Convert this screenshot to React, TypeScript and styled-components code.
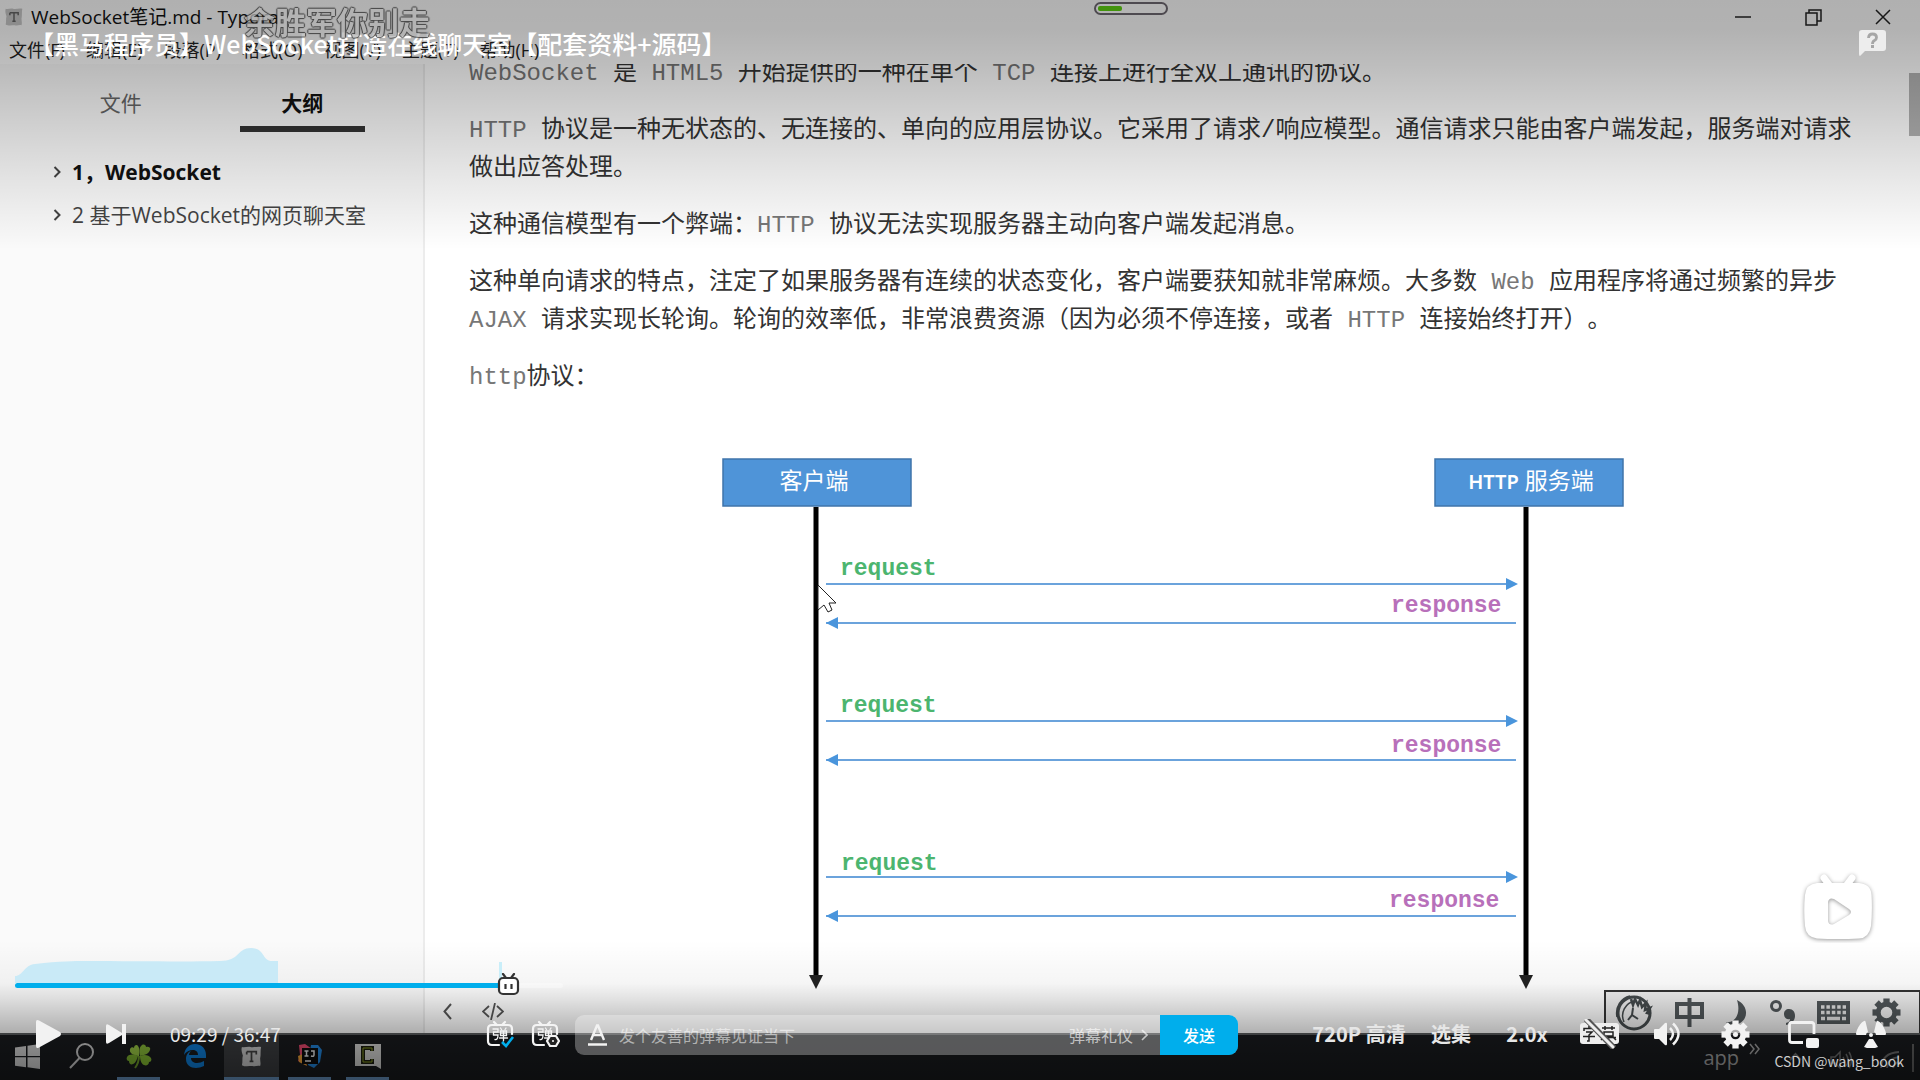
import React from "react";
import styled, { createGlobalStyle } from "styled-components";

const uiFont = `"Open Sans", "Noto Sans CJK SC", sans-serif`;
const playerFont = `"Noto Sans CJK SC", sans-serif`;
const monoFont = `"Liberation Mono", "Noto Sans CJK SC", monospace`;

const GlobalStyle = createGlobalStyle`
  *, *::before, *::after { box-sizing: border-box; }
  html, body { margin: 0; padding: 0; background: #000; }
  body { font-family: ${uiFont}; text-spacing-trim: space-all; }
  button, input { font: inherit; color: inherit; border: 0; background: none; padding: 0; margin: 0; }
  button { cursor: pointer; }
  svg { display: block; flex: none; }
  p, h1, ul { margin: 0; padding: 0; }
`;

const Stage = styled.main`
  display: grid;
  grid-template: 100vh / 100%;
  overflow: hidden;
  position: relative;
`;

const Desktop = styled.section`
  grid-area: 1 / 1;
  display: flex;
  flex-direction: column;
  min-height: 0;
  background: #fff;
`;

/* ---------- editor window ---------- */

const TitleBar = styled.header`
  display: flex;
  align-items: center;
  height: 34px;
  flex: none;
  padding: 0 2px 0 4px;
  gap: 7px;
  color: #111;
  font-size: 19px;
  line-height: 24px;
`;

const WindowButtons = styled.div`
  display: flex;
  margin-left: auto;
`;

const WindowButton = styled.button`
  width: 70px;
  height: 34px;
  display: grid;
  place-items: center;
`;

const MenuBar = styled.nav`
  display: flex;
  align-items: center;
  height: 30px;
  flex: none;
  padding: 2px 9px 0;
  gap: 21px;
  color: #222;
  font-size: 18px;
  line-height: 24px;
  white-space: nowrap;
`;

const Workspace = styled.div`
  display: flex;
  flex: 1;
  min-height: 0;
`;

const Sidebar = styled.aside`
  width: 425px;
  flex: none;
  background: #fafafa;
  border-right: 2px solid #ececec;
`;

const Tabs = styled.div`
  display: flex;
  gap: 56px;
  padding: 20px 58px 0;
`;

const Tab = styled.button<{ $active?: boolean }>`
  width: 126px;
  height: 48px;
  padding-bottom: 4px;
  font-size: 21px;
  line-height: 32px;
  font-weight: ${(p) => (p.$active ? 700 : 400)};
  color: ${(p) => (p.$active ? "#111" : "#666")};
  border-bottom: 6px solid ${(p) => (p.$active ? "#333" : "transparent")};
`;

const Outline = styled.ul`
  list-style: none;
  padding: 18px 53px 0;
`;

const OutlineItem = styled.li<{ $strong?: boolean }>`
  display: flex;
  align-items: center;
  gap: 10px;
  height: 43px;
  white-space: nowrap;
  font-size: 21px;
  line-height: 32px;
  font-weight: ${(p) => (p.$strong ? 700 : 400)};
  color: ${(p) => (p.$strong ? "#111" : "#444")};
`;

const Editor = styled.div`
  position: relative;
  flex: 1;
  min-width: 0;
  display: flex;
  flex-direction: column;
`;

const Article = styled.article`
  flex: 1;
  min-height: 0;
  overflow: hidden;
  padding: 0 48px 0 44px;
  font-family: ${monoFont};
  font-size: 24px;
  line-height: 38px;
  color: #333;
  background: #fff;

  p { margin-bottom: 19px; }
  p:first-child { margin-top: -9px; }
`;

const Latin = styled.span`
  color: #777;
`;

const Figure = styled.figure`
  margin: 60px 0 0;
  display: flex;
  justify-content: center;
  svg { overflow: visible; }
`;

const EditorFooter = styled.footer`
  height: 43px;
  flex: none;
  display: flex;
  align-items: center;
  gap: 30px;
  padding-left: 18px;
  color: #555;
`;

const ScrollThumb = styled.div`
  position: absolute;
  right: 0;
  top: 9px;
  width: 11px;
  height: 63px;
  background: #b2b2b2;
`;

const ImeBar = styled.div`
  position: absolute;
  right: 0;
  bottom: 0;
  height: 43px;
  display: flex;
  align-items: center;
  gap: 22px;
  padding: 0 18px 0 8px;
  border: 1px solid #333;
  border-width: 2px 1px 0 2px;
  background: #f2f2f2;
  color: #51575a;
`;

/* ---------- task bar ---------- */

const Taskbar = styled.footer`
  height: 47px;
  flex: none;
  display: flex;
  justify-content: space-between;
  background: #191b1e;
  border-top: 2px solid #5a5c5e;
`;

const TaskGroup = styled.div`
  display: flex;
  align-items: stretch;
  gap: 1px;
`;

const TaskButton = styled.button<{ $open?: boolean; $active?: boolean }>`
  width: ${(p) => (p.$active ? 55 : p.$open ? 43 : 54)}px;
  margin: 0 ${(p) => (p.$active ? 1 : p.$open ? 7 : 0)}px;
  display: grid;
  place-items: center;
  border-bottom: 3px solid ${(p) => (p.$open ? "#6d9bcb" : "transparent")};
  background: ${(p) => (p.$active ? "#3c3e41" : "transparent")};

  &:nth-child(n + 3) { position: static; }
`;

const Tray = styled.div`
  display: flex;
  align-items: center;
  gap: 10px;
  padding-right: 6px;
  color: #a4a4a4;
  font-size: 20px;
  line-height: 26px;
`;

const TrayIcons = styled.span`
  display: flex;
  gap: 28px;
  padding: 4px 12px 0 18px;
  color: #6c6c6c;
  border-right: 2px solid #606060;
`;

/* ---------- player chrome ---------- */

const TopShade = styled.div`
  grid-area: 1 / 1;
  align-self: start;
  height: 250px;
  z-index: 1;
  pointer-events: none;
  background: linear-gradient(rgba(0,0,0,.31), rgba(0,0,0,.3) 12%, rgba(0,0,0,.26) 26%, rgba(0,0,0,.17) 50%, rgba(0,0,0,.09) 72%, rgba(0,0,0,0));
`;

const BottomShade = styled.div`
  grid-area: 1 / 1;
  align-self: end;
  height: 140px;
  z-index: 1;
  pointer-events: none;
  background: linear-gradient(rgba(0,0,0,0), rgba(0,0,0,.04) 31%, rgba(0,0,0,.12) 43%, rgba(0,0,0,.3) 66%, rgba(0,0,0,.5));
`;

const Player = styled.section`
  grid-area: 1 / 1;
  z-index: 2;
  min-height: 0;
  display: flex;
  flex-direction: column;
  justify-content: space-between;
  position: relative;
  color: #fff;
  font-family: ${playerFont};
`;

const PlayerHeader = styled.header`
  display: flex;
  justify-content: space-between;
  align-items: flex-start;
  padding: 25px 34px 0 29px;
`;

const VideoTitle = styled.h1`
  font-size: 25px;
  line-height: 36px;
  font-weight: 500;
  white-space: nowrap;
`;

const HelpButton = styled.button`
  margin-top: 5px;
`;

const Danmaku = styled.span`
  position: absolute;
  left: 244px;
  top: -1px;
  font-size: 31px;
  line-height: 44px;
  font-weight: 700;
  color: #b4b4b4;
  opacity: .75;
  text-shadow: 1px 0 1px #222, -1px 0 1px #222, 0 1px 1px #222, 0 -1px 1px #222;
`;

const RecorderPill = styled.div`
  position: absolute;
  left: 57%;
  top: 2px;
  width: 74px;
  height: 13px;
  border: 2px solid #4e4a50;
  border-radius: 7px;
  background: #b4b4b4;
  padding: 2px;
`;

const RecorderLevel = styled.div`
  width: 24px;
  height: 5px;
  border-radius: 2px;
  background: #43930d;
`;

const Badge = styled.div`
  position: absolute;
  right: 44px;
  bottom: 137px;
`;

const PlayerBottom = styled.div`
  display: flex;
  flex-direction: column;
  gap: 27px;
  padding-bottom: 25px;
`;

const Progress = styled.div`
  position: relative;
  margin: 0 15px;
`;

const Heat = styled.svg`
  width: 100%;
  height: 37px;
`;

const Track = styled.div`
  height: 5px;
  border-radius: 3px;
`;

const Buffered = styled.div`
  width: 29%;
  height: 5px;
  border-radius: 3px;
  background: rgba(255,255,255,.35);
`;

const Played = styled.div`
  height: 5px;
  border-radius: 3px;
  background: #00aeec;
`;

const Seek = styled.input`
  position: absolute;
  inset: auto 0 0 0;
  width: 100%;
  height: 16px;
  opacity: 0;
`;

const Thumb = styled.div`
  position: absolute;
  bottom: -10px;
  margin-left: -8px;
`;

const Controls = styled.div`
  display: flex;
  align-items: center;
  height: 40px;
  padding-right: 15px;
`;

const Transport = styled.div`
  display: flex;
  align-items: center;
  width: 478px;
  flex: none;
  padding-left: 14px;
`;

const IconButton = styled.button<{ $w?: number }>`
  width: ${(p) => p.$w ?? 68}px;
  height: 40px;
  display: grid;
  place-items: center;
  padding-bottom: 2px;
  color: #f2f2f2;
`;

const Time = styled.span`
  margin-left: 20px;
  padding-bottom: 2px;
  font-size: 19px;
  line-height: 28px;
  color: #e8e8e8;
`;

const DanmakuArea = styled.div`
  display: flex;
  align-items: center;
  flex: 0 1 760px;
  min-width: 0;
`;

const DanmakuBar = styled.form`
  display: flex;
  flex: 1;
  min-width: 0;
  height: 40px;
  margin-left: 7px;
  border-radius: 9px;
  overflow: hidden;
  background: rgba(255,255,255,.3);
  font-size: 16px;
  line-height: 24px;
`;

const StyleButton = styled.button`
  width: 44px;
  flex: none;
  display: grid;
  place-items: center;
  color: #f2f2f2;
`;

const DanmakuInput = styled.input`
  flex: 1;
  min-width: 0;
  outline: 0;
  &::placeholder { color: rgba(255,255,255,.55); opacity: 1; }
`;

const Etiquette = styled.a`
  display: flex;
  align-items: center;
  gap: 8px;
  padding-right: 12px;
  color: rgba(255,255,255,.65);
  text-decoration: none;
  white-space: nowrap;
`;

const SendButton = styled.button`
  width: 78px;
  flex: none;
  background: #00aeec;
  color: #fff;
  font-weight: 500;
`;

const Options = styled.div`
  display: flex;
  align-items: center;
  margin-left: auto;
`;

const TextOption = styled.button<{ $w?: number }>`
  width: ${(p) => p.$w ?? 76}px;
  height: 40px;
  padding-bottom: 2px;
  font-size: 20px;
  line-height: 28px;
  font-weight: 700;
  color: #e6e6e6;
  white-space: nowrap;
`;

const Watermark = styled.span`
  position: absolute;
  right: 16px;
  bottom: 7px;
  font-size: 14px;
  line-height: 24px;
  color: #ccc;
`;

/* ---------- icons ---------- */

const Chevron = () => (
  <svg width="9" height="14" viewBox="0 0 9 14" fill="none" stroke="#444" strokeWidth="2"><path d="M1.500 2l5 5-5 5" /></svg>
);

const TyporaMark = ({ size, fill, ink }: { size: number; fill: string; ink: string }) => (
  <svg width={size} height={size} viewBox="0 0 24 24">
    <path d="M2 2c3 1 6-1 9 0s7-1 11 0c-1 4 0 8-1 12 0 3 1 5 0 8-3-1-5 1-8 0-4 0-8 1-11-1 1-4 0-7 1-10C2 8 1 5 2 2z" fill={fill} />
    <path d="M7 7h10v3M7 10V7M12 7v10M10 17h4" stroke={ink} strokeWidth="1.800" fill="none" />
  </svg>
);

const WindowsLogo = () => (
  <svg width="25" height="25" viewBox="0 0 25 25" fill="#d6d6d6">
    <path d="M0 3.500L11 2v10H0zM12.500 1.800L25 0v12H12.500zM0 13.300h11v10L0 21.800zM12.500 13.300H25V25l-12.500-1.700z" />
  </svg>
);

const SearchGlyph = () => (
  <svg width="26" height="26" viewBox="0 0 26 26" fill="none" stroke="#d0d0d0" strokeWidth="2"><circle cx="16" cy="9" r="8" /><path d="M10.500 15L1 25" /></svg>
);

const Clover = () => (
  <svg width="26" height="25" viewBox="0 0 26 25">
    <path d="M12 12C7 11 3 9 4 5c1-2 3-2 4-1 0-3 3-4 4-2 2 2 1 7 1 10z" fill="#9ccb45" />
    <path d="M14 12c-1-4-1-9 2-11 2-1 4 0 4 2 3-1 5 1 4 3-1 4-6 5-10 6z" fill="#8cc03a" />
    <path d="M12 12c-4-2-9-2-11 1-1 2 0 4 2 4 0 3 2 4 4 3 3-1 4-5 5-8z" fill="#7fb530" />
    <path d="M14 12c4-2 9-1 11 2 1 2 0 4-2 4 0 3-3 4-5 3-3-1-4-6-4-9z" fill="#86bd32" />
    <path d="M13 12c0 4-1 8-4 12" fill="none" stroke="#6f9f2a" strokeWidth="2" />
  </svg>
);

const EdgeMark = () => (
  <svg width="22" height="24" viewBox="0 0 22 24">
    <path d="M0 11C1 4 5 0 11 0c7 0 11 5 11 11v3H7c0 6 8 6 13 3v5C12 26 2 24 2 15c0-4 2-7 5-8-1 1-2 2-2 4h9c0-7-10-6-14 0z" fill="#0e80dc" />
  </svg>
);

const IdeaMark = () => (
  <svg width="26" height="26" viewBox="0 0 26 26">
    <path d="M2 2l6-1 7 5-6 16-8-4 2-6z" fill="#ee4a70" />
    <path d="M1 13l5-2 4 12-8-4z" fill="#f4a536" />
    <path d="M14 2l7 0 4 5-2 12-6 6-6-3z" fill="#2288e0" />
    <rect x="5" y="5" width="16" height="16" fill="#0c0c0c" />
    <path d="M7.500 8h4M9.500 8v5M7.500 13h4M14 8h3v4q0 2-3 1M8 18h6" stroke="#eee" strokeWidth="1.500" fill="none" />
  </svg>
);

const CamtasiaMark = () => (
  <svg width="26" height="25" viewBox="0 0 26 25">
    <path d="M0 0h26v25l-5-3H0z" fill="#d8d8d6" />
    <path d="M17 7V4H8v14h9v-3" fill="none" stroke="#1a1c10" strokeWidth="4" />
    <path d="M17 7V4H8v14h9v-3" fill="none" stroke="#8ea024" strokeWidth="1" />
  </svg>
);

const Swirl = () => (
  <svg width="39" height="36" viewBox="0 0 39 36" fill="none" stroke="#454b4d">
    <circle cx="20" cy="18" r="16" strokeWidth="3" />
    <path d="M10 27C6 18 11 8 21 6M3 22C1 12 7 3 16 1" strokeWidth="1.500" />
    <path d="M17 4l2 6 2-6 3 6 2-5 2 7 4-4-1 7 5-2-3 5 4 1" strokeWidth="2.500" />
    <path d="M14 25l4-5 6 4M18 20l1-7" strokeWidth="2" />
  </svg>
);

const ZhongMark = () => (
  <svg width="29" height="29" viewBox="0 0 29 29" fill="none" stroke="currentColor" strokeWidth="4"><path d="M2 6h25v13H2zM14.500 0v29" /></svg>
);

const Moon = () => (
  <svg width="22" height="26" viewBox="0 0 22 26"><path d="M11 0c13 6 12 23-3 25-3 0-6-1-8-3 10 1 15-9 11-22z" fill="currentColor" /></svg>
);

const PunctMark = () => (
  <svg width="25" height="26" viewBox="0 0 25 26"><circle cx="6" cy="6" r="4.500" fill="none" stroke="currentColor" strokeWidth="3" /><path d="M19 9c4 0 6 3 6 7 0 5-4 8-9 9v-2c3-1 4-2 4-4-4 1-6-2-6-5s2-5 5-5z" fill="currentColor" /></svg>
);

const Keyboard = () => (
  <svg width="33" height="23" viewBox="0 0 33 23">
    <rect width="33" height="23" fill="currentColor" />
    <path d="M4 6h25M4 11.500h25" stroke="#e4e4e4" strokeWidth="3.500" strokeDasharray="3.500 1.900" />
    <path d="M4 17.500h4M10 17.500h13M25 17.500h4" stroke="#e4e4e4" strokeWidth="3.500" />
  </svg>
);

const Gear = ({ size, hole, dot }: { size: number; hole: number; dot?: boolean }) => (
  <svg width={size} height={size} viewBox="-15 -15 30 30">
    <g fill="none" stroke="currentColor">
      <circle r={(hole + 11) / 2} strokeWidth={11 - hole} />
      {[0, 45, 90, 135, 180, 225, 270, 315].map((a) => (
        <path key={a} d="M0 -9V-14.500" strokeWidth="6.500" transform={`rotate(${a})`} />
      ))}
      {dot && <circle r="2.600" fill="currentColor" stroke="none" />}
    </g>
  </svg>
);

const TvFrame = ({ children }: { children: React.ReactNode }) => (
  <svg width="29" height="29" viewBox="0 0 29 29" fill="none" stroke="#f4f4f4" strokeWidth="2.200" strokeLinecap="round">
    <path d="M8 2l3 3M19 2l-3 3M26 14V9c0-3-1-4-4-4H6C3 5 2 6 2 9v12c0 3 1 4 4 4h7" />
    <path d="M7 9h5v3H7.500v3H12q0 5-3 4.500M14.500 8l1 1.500M20 8l-1 1.500M14.500 11h6v4.500h-6zM14.500 13.200h6M17.500 11v10M13.500 18h8" strokeWidth="1.300" />
    {children}
  </svg>
);

/* ---------- sequence diagram ---------- */

const exchanges = [
  { request: 127, requestLabel: 118, labelX: 122, response: 166, responseLabel: 155, responseX: 673 },
  { request: 264, requestLabel: 255, labelX: 122, response: 303, responseLabel: 295, responseX: 673 },
  { request: 420, requestLabel: 413, labelX: 123, response: 459, responseLabel: 450, responseX: 671 },
];

const Head = styled.text`
  font-family: "Noto Sans", "Noto Sans CJK SC", sans-serif;
  font-size: 23px;
  fill: #fff;
`;

const HeadLatin = styled.tspan`
  font-size: 20px;
  font-weight: 600;
`;

const Message = styled.text<{ $reply?: boolean }>`
  font-family: "Liberation Mono", monospace;
  font-size: 23px;
  font-weight: 700;
  fill: ${(p) => (p.$reply ? "#b870ba" : "#4cb56f")};
`;

const SequenceDiagram = () => (
  <svg width="905" height="533" viewBox="0 0 905 533" role="img" aria-label="HTTP sequence diagram">
    {[{ x: 5, latin: "", label: "客户端", tx: 96 }, { x: 717, latin: "HTTP", label: " 服务端", tx: 813 }].map((n) => (
      <g key={n.x}>
        <rect x={n.x} y="2" width="188" height="47" fill="#4f94d8" stroke="#3f74aa" strokeWidth="1.500" />
        <Head x={n.tx} y="32" textAnchor="middle">
          {n.latin && <HeadLatin>{n.latin}</HeadLatin>}
          {n.label}
        </Head>
      </g>
    ))}
    {[98, 808].map((x) => (
      <g key={x}>
        <path d={`M${x} 50V520`} stroke="#000" strokeWidth="5" />
        <path d={`M${x - 7} 518h14l-7 14z`} fill="#222" />
      </g>
    ))}
    {exchanges.map((e) => (
      <g key={e.request} fill="#4a95dc">
        <path d={`M108 ${e.request}H790M108 ${e.response}H798`} stroke="#6ba3dc" strokeWidth="2" />
        <path d={`M800 ${e.request}l-12-6v12z`} />
        <path d={`M108 ${e.response}l12-6v12z`} />
        <Message x={e.labelX} y={e.requestLabel}>request</Message>
        <Message x={e.responseX} y={e.responseLabel} $reply>response</Message>
      </g>
    ))}
    <path d="M100 128v25l6-5 4 7 4-2-3-7h7z" fill="#fff" stroke="#222" strokeWidth="1" />
  </svg>
);

const menus = ["文件(F)", "编辑(E)", "段落(P)", "格式(O)", "视图(V)", "主题(T)", "帮助(H)"];

export default function App() {
  const played = 25.8;
  return (
    <Stage>
      <GlobalStyle />
      <Desktop>
        <TitleBar>
          <TyporaMark size={20} fill="#c9c9c9" ink="#666" />
          <span>WebSocket笔记.md - Typora</span>
          <WindowButtons>
            <WindowButton aria-label="最小化"><svg width="16" height="16" viewBox="0 0 16 16" stroke="#222" strokeWidth="1.500"><path d="M0 8h16" /></svg></WindowButton>
            <WindowButton aria-label="还原"><svg width="17" height="17" viewBox="0 0 17 17" fill="none" stroke="#222" strokeWidth="1.500"><path d="M1 4h11v12H1zM4 4V1h12v11h-4" /></svg></WindowButton>
            <WindowButton aria-label="关闭"><svg width="16" height="16" viewBox="0 0 16 16" stroke="#222" strokeWidth="1.500"><path d="M1 1l14 14M15 1L1 15" /></svg></WindowButton>
          </WindowButtons>
        </TitleBar>
        <MenuBar>
          {menus.map((m) => <button key={m}>{m}</button>)}
        </MenuBar>
        <Workspace>
          <Sidebar>
            <Tabs>
              <Tab>文件</Tab>
              <Tab $active>大纲</Tab>
            </Tabs>
            <Outline>
              <OutlineItem $strong><Chevron />1，WebSocket</OutlineItem>
              <OutlineItem><Chevron />2 基于WebSocket的网页聊天室</OutlineItem>
            </Outline>
          </Sidebar>
          <Editor>
            <Article>
              <p><Latin>WebSocket</Latin> 是 <Latin>HTML5</Latin> 开始提供的一种在单个 <Latin>TCP</Latin> 连接上进行全双工通讯的协议。</p>
              <p><Latin>HTTP</Latin> 协议是一种无状态的、无连接的、单向的应用层协议。它采用了请求/响应模型。通信请求只能由客户端发起，服务端对请求做出应答处理。</p>
              <p>这种通信模型有一个弊端：<Latin>HTTP</Latin> 协议无法实现服务器主动向客户端发起消息。</p>
              <p>这种单向请求的特点，注定了如果服务器有连续的状态变化，客户端要获知就非常麻烦。大多数 <Latin>Web</Latin> 应用程序将通过频繁的异步 <Latin>AJAX</Latin> 请求实现长轮询。轮询的效率低，非常浪费资源（因为必须不停连接，或者 <Latin>HTTP</Latin> 连接始终打开）。</p>
              <p><Latin>http</Latin>协议：</p>
              <Figure><SequenceDiagram /></Figure>
            </Article>
            <EditorFooter>
              <svg width="9" height="17" viewBox="0 0 9 17" fill="none" stroke="currentColor" strokeWidth="2"><path d="M8 1L1.500 8.500 8 16" /></svg>
              <svg width="22" height="17" viewBox="0 0 22 17" fill="none" stroke="currentColor" strokeWidth="1.800"><path d="M7 3L1 8.500 7 14M15 3l6 5.500-6 5.500M13 0L9 17" /></svg>
            </EditorFooter>
            <ScrollThumb />
            <ImeBar>
              <Swirl /><ZhongMark /><Moon /><PunctMark /><Keyboard /><Gear size={29} hole={6} />
            </ImeBar>
          </Editor>
        </Workspace>
        <Taskbar>
          <TaskGroup>
            <TaskButton aria-label="开始"><WindowsLogo /></TaskButton>
            <TaskButton aria-label="搜索"><SearchGlyph /></TaskButton>
            <TaskButton aria-label="Clover" $open><Clover /></TaskButton>
            <TaskButton aria-label="Edge"><EdgeMark /></TaskButton>
            <TaskButton aria-label="Typora" $open $active><TyporaMark size={23} fill="#cfcfcf" ink="#444" /></TaskButton>
            <TaskButton aria-label="IDEA" $open><IdeaMark /></TaskButton>
            <TaskButton aria-label="Camtasia" $open><CamtasiaMark /></TaskButton>
          </TaskGroup>
          <Tray>
            <span>app</span>
            <svg width="12" height="30" viewBox="0 0 12 30" fill="none" stroke="currentColor" strokeWidth="1.500"><path d="M1 1l4 5-4 5M6 1l4 5-4 5" /></svg>
            <TrayIcons>
              <svg width="13" height="24" viewBox="0 0 13 24" fill="none" stroke="currentColor" strokeWidth="2"><path d="M1 12l5.500-6L12 12" /></svg>
              <svg width="22" height="24" viewBox="0 0 22 24" fill="none" stroke="currentColor" strokeWidth="1.500"><path d="M1 9h4l5-5v16l-5-5H1zM13 9q2 3 0 6M16 6q4 6 0 12M19 4q5 8 0 16" /></svg>
              <svg width="20" height="24" viewBox="0 0 20 24" fill="none" stroke="currentColor" strokeWidth="2"><path d="M1 20Q2 5 19 4M7 20q1-10 12-11M13 20q1-5 6-6" /></svg>
            </TrayIcons>
          </Tray>
        </Taskbar>
      </Desktop>

      <TopShade />
      <BottomShade />

      <Player>
        <Danmaku>余胜军你别走</Danmaku>
        <RecorderPill><RecorderLevel /></RecorderPill>
        <PlayerHeader>
          <VideoTitle>【黑马程序员】WebSocket打造在线聊天室【配套资料+源码】</VideoTitle>
          <HelpButton aria-label="反馈">
            <svg width="27" height="26" viewBox="0 0 27 26">
              <path d="M3 0h21q3 0 3 3v15q0 3-3 3H6l-5 5q-1 0-1-2V3q0-3 3-3z" fill="#ededed" />
              <path d="M9.500 8q.3-4 4-4 4 0 4 3.500 0 2-2 3-2 1-2 3.500" fill="none" stroke="#a6a6a6" strokeWidth="2.800" />
              <rect x="12" y="15" width="3" height="3" fill="#a6a6a6" />
            </svg>
          </HelpButton>
        </PlayerHeader>
        <Badge>
          <svg width="76" height="72" viewBox="-4 -3 76 72">
            <g fill="#fff" style={{ filter: "drop-shadow(0 1px 2px rgba(0,0,0,.4))" }}>
              <path d="M20 4l6 8M48 4l-6 8" stroke="#fff" strokeWidth="7" strokeLinecap="round" />
              <path fillRule="evenodd" d="M13 9h42q12 1 12.500 12 1 15-.5 31-2 12-12 12.500-21 1-42 0Q2 63 1 52q-1.500-16 0-31Q2 10 13 9zM24 28v19q1 5 6 3l15-9q4-3 0-6L30 25q-5-2-6 3z" />
            </g>
          </svg>
        </Badge>
        <PlayerBottom>
          <Progress>
            <Heat viewBox="0 0 1890 37" preserveAspectRatio="none">
              <path d="M0 37V30C8 30 9 19 20 18C45 15 60 15 70 15C120 15 170 16 205 15C225 15 222 2 236 2C250 2 247 15 257 15H263V37z" fill="#c9eaf7" />
              <path d="M484 16h3v21h-3z" fill="#c9eef9" />
            </Heat>
            <Track><Buffered><Played style={{ width: `${(played / 29) * 100}%` }} /></Buffered></Track>
            <Thumb style={{ left: `${played}%` }}>
              <svg width="28" height="25" viewBox="0 0 28 25" fill="#fff" stroke="#333" strokeWidth="2.200">
                <path d="M8 1l3 4M19 1l-3 4" strokeLinecap="round" />
                <rect x="4" y="5" width="19" height="16" rx="4" />
                <path d="M10.500 11v5M16.500 11v5" />
              </svg>
            </Thumb>
            <Seek type="range" min={0} max={2207} defaultValue={569} aria-label="播放进度" />
          </Progress>
          <Controls>
            <Transport>
              <IconButton aria-label="播放"><svg width="25" height="28" viewBox="0 0 25 28" fill="currentColor"><path d="M0 2q0-3 3-1.500L24 12q2 2 0 4L3 27.500Q0 29 0 26z" /></svg></IconButton>
              <IconButton aria-label="下一个"><svg width="20" height="20" viewBox="0 0 20 20" fill="currentColor"><path d="M0 2q0-3 3-1l13 8V0h4v20h-4v-9L3 19q-3 2-3-1z" /></svg></IconButton>
              <Time>09:29 / 36:47</Time>
            </Transport>
            <DanmakuArea>
              <IconButton $w={45} aria-label="弹幕开关">
                <TvFrame><path d="M16 22l4 4 7-9" stroke="#00aeec" strokeWidth="2.600" strokeLinecap="butt" /></TvFrame>
              </IconButton>
              <IconButton $w={45} aria-label="弹幕设置">
                <TvFrame><path d="M19 16h6l3 5-3 5h-6l-3-5z" fill="#222" strokeLinejoin="round" /><circle cx="22" cy="21" r="1" fill="#fff" stroke="none" /></TvFrame>
              </IconButton>
              <DanmakuBar onSubmit={(e) => e.preventDefault()}>
                <StyleButton type="button" aria-label="文字样式">
                  <svg width="19" height="22" viewBox="0 0 19 22" fill="none" stroke="currentColor" strokeWidth="2.400"><path d="M3 16L9 1.500h1L16 16M5 11h9" /><path d="M0 20.500h19" /></svg>
                </StyleButton>
                <DanmakuInput type="text" placeholder="发个友善的弹幕见证当下" aria-label="弹幕" />
                <Etiquette href="#etiquette">弹幕礼仪
                  <svg width="7" height="12" viewBox="0 0 7 12" fill="none" stroke="currentColor" strokeWidth="1.600"><path d="M1 1l5 5-5 5" /></svg>
                </Etiquette>
                <SendButton type="submit">发送</SendButton>
              </DanmakuBar>
            </DanmakuArea>
            <Options>
              <TextOption $w={108}>720P 高清</TextOption>
              <TextOption>选集</TextOption>
              <TextOption>2.0x</TextOption>
              <IconButton aria-label="字幕">
                <svg width="39" height="30" viewBox="0 0 39 30">
                  <rect y="4" width="39" height="21" rx="3" fill="#eee" />
                  <path d="M9 7v2M4 12V9.500h10V12M6 13h6l-3 3v6H7M3 17.500h12M22 9h13M25 7v4M32 7v4M24 13h9v4h-9zM21 18.500h15M24 18l-3 3M33 18l3 3M28.500 18v6" fill="none" stroke="#222" strokeWidth="1.500" />
                  <path d="M6 0l28 29" stroke="#555" strokeWidth="6" /><path d="M6 1l27 27" stroke="#eee" strokeWidth="3" strokeLinecap="round" />
                </svg>
              </IconButton>
              <IconButton aria-label="音量"><svg width="27" height="24" viewBox="0 0 27 24" fill="currentColor"><path d="M0 8q0-1 1-1h4l6-6q2-1 2 1v20q0 2-2 1l-6-6H1q-1 0-1-1z" /><path d="M16 6q6 6 0 12M19 1.500q11 10.500 0 21" fill="none" stroke="currentColor" strokeWidth="2.500" /></svg></IconButton>
              <IconButton aria-label="设置"><Gear size={29} hole={5} dot /></IconButton>
              <IconButton aria-label="画中画"><svg width="31" height="27" viewBox="0 0 31 27" fill="none" stroke="currentColor" strokeWidth="2.800"><path d="M26 13V4q0-2.500-2.500-2.500h-20Q1.500 1.500 1.500 4v15q0 2.500 2.500 2.500h11" /><rect x="18" y="17" width="13" height="10" rx="2" fill="currentColor" stroke="none" /></svg></IconButton>
              <IconButton aria-label="网页全屏"><svg width="30" height="28" viewBox="-15 -15 30 28" fill="currentColor"><circle r="2" /><path d="M-3-3Q-5-2-5 0h-9q-2 0 0-5 3-7 7-9 1-.5 1.500.5zM3-3Q5-2 5 0h9q2 0 0-5-3-7-7-9-1-.5-1.500.5zM-2 4h4l5 8q-7 3-14 0z" /></svg></IconButton>
            </Options>
          </Controls>
        </PlayerBottom>
        <Watermark>CSDN @wang_book</Watermark>
      </Player>
    </Stage>
  );
}
